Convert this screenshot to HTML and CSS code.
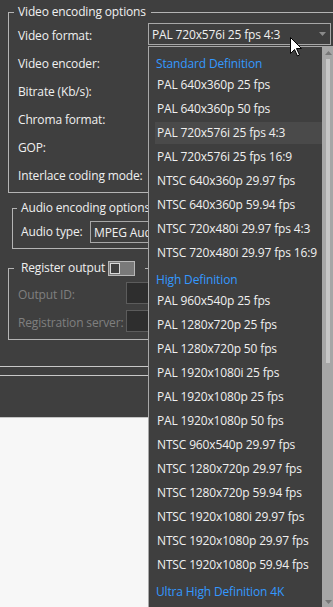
FILE: index.html
```html
<!DOCTYPE html>
<html>
<head>
<meta charset="utf-8">
<link rel="stylesheet" href="styles.css">
</head>
<body>
<div class="app">
  <div class="panel">
    <fieldset class="group video">
      <legend class="title">Video encoding options</legend>
      <div class="row">
        <span class="lbl lbl-video">Video format:</span>
        <div class="combo">
          <span>PAL 720x576i 25 fps 4:3</span>
          <svg class="combo-arrow" width="7" height="4" viewBox="0 0 7 4"><path d="M0 0H7L3.5 4Z" fill="#8a8a8a"/></svg>
        </div>
      </div>
      <div class="row"><span class="lbl lbl-video">Video encoder:</span></div>
      <div class="row"><span class="lbl lbl-video">Bitrate (Kb/s):</span></div>
      <div class="row"><span class="lbl lbl-video">Chroma format:</span></div>
      <div class="row"><span class="lbl lbl-video">GOP:</span></div>
      <div class="row"><span class="lbl lbl-video">Interlace coding mode:</span></div>
    </fieldset>

    <fieldset class="group audio">
      <legend class="title title-audio">Audio encoding options</legend>
      <div class="row row-audio">
        <span class="lbl lbl-audio">Audio type:</span>
        <div class="combo combo-audio"><span>MPEG Aud</span></div>
      </div>
    </fieldset>

    <fieldset class="group register">
      <legend class="title title-reg">
        <span>Register output</span>
        <span class="toggle"><span class="knob"></span></span>
      </legend>
      <div class="row">
        <span class="lbl lbl-reg disabled">Output ID:</span>
        <div class="field"></div>
      </div>
      <div class="row">
        <span class="lbl lbl-reg disabled">Registration server:</span>
        <div class="field"></div>
      </div>
    </fieldset>

    <div class="divider"></div>
  </div>
  <div class="lower"></div>

  <div class="dropdown">
    <div class="list">
      <div class="hdr">Standard Definition</div>
      <div class="item">PAL 640x360p 25 fps</div>
      <div class="item">PAL 640x360p 50 fps</div>
      <div class="item selected">PAL 720x576i 25 fps 4:3</div>
      <div class="item">PAL 720x576i 25 fps 16:9</div>
      <div class="item">NTSC 640x360p 29.97 fps</div>
      <div class="item">NTSC 640x360p 59.94 fps</div>
      <div class="item">NTSC 720x480i 29.97 fps 4:3</div>
      <div class="item">NTSC 720x480i 29.97 fps 16:9</div>
      <div class="hdr">High Definition</div>
      <div class="item">PAL 960x540p 25 fps</div>
      <div class="item">PAL 1280x720p 25 fps</div>
      <div class="item">PAL 1280x720p 50 fps</div>
      <div class="item">PAL 1920x1080i 25 fps</div>
      <div class="item">PAL 1920x1080p 25 fps</div>
      <div class="item">PAL 1920x1080p 50 fps</div>
      <div class="item">NTSC 960x540p 29.97 fps</div>
      <div class="item">NTSC 1280x720p 29.97 fps</div>
      <div class="item">NTSC 1280x720p 59.94 fps</div>
      <div class="item">NTSC 1920x1080i 29.97 fps</div>
      <div class="item">NTSC 1920x1080p 29.97 fps</div>
      <div class="item">NTSC 1920x1080p 59.94 fps</div>
      <div class="hdr">Ultra High Definition 4K</div>
    </div>
    <div class="scrollbar">
      <svg class="sb-arrow" width="7" height="4" viewBox="0 0 7 4"><path d="M0 4H7L3.5 0Z" fill="#777"/></svg>
      <div class="sb-track"><div class="sb-thumb"></div></div>
      <svg class="sb-arrow" width="7" height="4" viewBox="0 0 7 4"><path d="M0 0H7L3.5 4Z" fill="#777"/></svg>
    </div>
  </div>

  <svg class="cursor" width="13" height="21" viewBox="0 0 13 21">
    <path d="M0.5 0.5V16.5L4.5 12.5L7.5 19L9.5 18L6.5 11.5H11.5Z" fill="#fff" stroke="#000" stroke-width="1" stroke-linejoin="miter"/>
  </svg>
</div>
</body>
</html>
```
FILE: styles.css
```css
html, body {
  margin: 0;
  padding: 0;
  overflow: hidden;
  height: 100%;
}
body {
  background: #f7f7f7;
  font-family: "Open Sans", "Noto Sans", sans-serif;
  font-size: 12px;
  letter-spacing: -0.15px;
  color: #f0f0f0;
}
.app {
  position: relative;
  width: 333px;
  height: 607px;
  overflow: hidden;
}
.panel {
  background: #3f3f3f;
  height: 417px;
  border-bottom: 1px solid #c4c4c4;
  display: flow-root;
}
.group {
  border: 1px solid #b4b4b4;
  margin: 0;
  min-width: 0;
  padding: 0 0 0 9px;
}
.title {
  padding: 0 5px 0 4px;
  margin-left: -4px;
  line-height: 16px;
  height: 16px;
  white-space: nowrap;
}
.video {
  margin: 4px -30px 0 8px;
  padding-top: 1px;
  padding-bottom: 3px;
}
.row {
  height: 28px;
  display: flex;
  align-items: center;
}
.lbl {
  white-space: nowrap;
  flex: none;
}
.lbl-video { width: 130px; }
.combo {
  align-self: flex-start;
  margin-top: 2px;
  width: 178px;
  height: 20px;
  border: 1px solid #a8a8a8;
  display: flex;
  align-items: center;
  padding-left: 3px;
  box-sizing: content-box;
  white-space: nowrap;
  overflow: hidden;
}
.combo span { flex: 1; }
.combo-arrow {
  margin-right: 4px;
  flex: none;
}
.audio {
  margin: 7px -30px 0 12px;
  padding: 2px 0 4px 8px;
}
.title-audio {
  max-width: 127px;
  overflow: hidden;
  padding-right: 0;
}
.row-audio { height: 26px; }
.lbl-audio { width: 69px; }
.combo-audio {
  margin-top: 3px;
  width: 54px;
  border-right: none;
}
.register {
  margin: 11px -30px 0 8px;
  padding: 4px 0 3px 9px;
}
.title-reg {
  display: flex;
  align-items: center;
  gap: 3px;
  padding: 0 10px 0 7px;
}
.toggle {
  width: 24px;
  height: 13px;
  border: 1px solid #b8b8b8;
  background: #7a7a7a;
  display: flex;
  align-items: center;
  padding-left: 1px;
}
.knob {
  width: 8px;
  height: 9px;
  border: 1px solid #d8d8d8;
  background: #3f3f3f;
}
.lbl-reg { width: 108px; }
.disabled { color: #7f7f7f; }
.field {
  align-self: flex-start;
  margin-top: 2px;
  width: 200px;
  height: 20px;
  border: 1px solid #5c5c5c;
  background: #2e2e2e;
}
.divider {
  margin-top: 26px;
  height: 8px;
  border-top: 1px solid #c8c8c8;
  border-bottom: 1px solid #c8c8c8;
}
.lower {
  background: #f7f7f7;
}
.dropdown {
  position: absolute;
  left: 148px;
  top: 46px;
  width: 185px;
  height: 580px;
  background: #3f3f3f;
  border-left: 1px solid #a8a8a8;
  border-top: 1px solid #a8a8a8;
  display: flex;
}
.list {
  flex: 1;
  padding: 3px 0 0 6px;
  min-width: 0;
}
.hdr {
  height: 24px;
  box-sizing: border-box;
  padding: 5px 0 0 1px;
  line-height: 18px;
  color: #3399ff;
  white-space: nowrap;
}
.item {
  height: 22px;
  line-height: 22px;
  margin-bottom: 2px;
  padding-left: 2px;
  white-space: nowrap;
}
.item.selected { background: #4a4a4a; }
.scrollbar {
  width: 12px;
  flex: none;
  background: #a6a6a6;
  display: flex;
  flex-direction: column;
  align-items: center;
  height: 561px;
}
.sb-arrow {
  flex: none;
  margin: 4px 0;
}
.sb-track {
  flex: 1;
  width: 100%;
  display: flex;
  justify-content: center;
}
.sb-thumb {
  width: 4px;
  height: 304px;
  background: #c6c6c6;
}
.cursor {
  position: absolute;
  left: 290px;
  top: 37px;
}
```
